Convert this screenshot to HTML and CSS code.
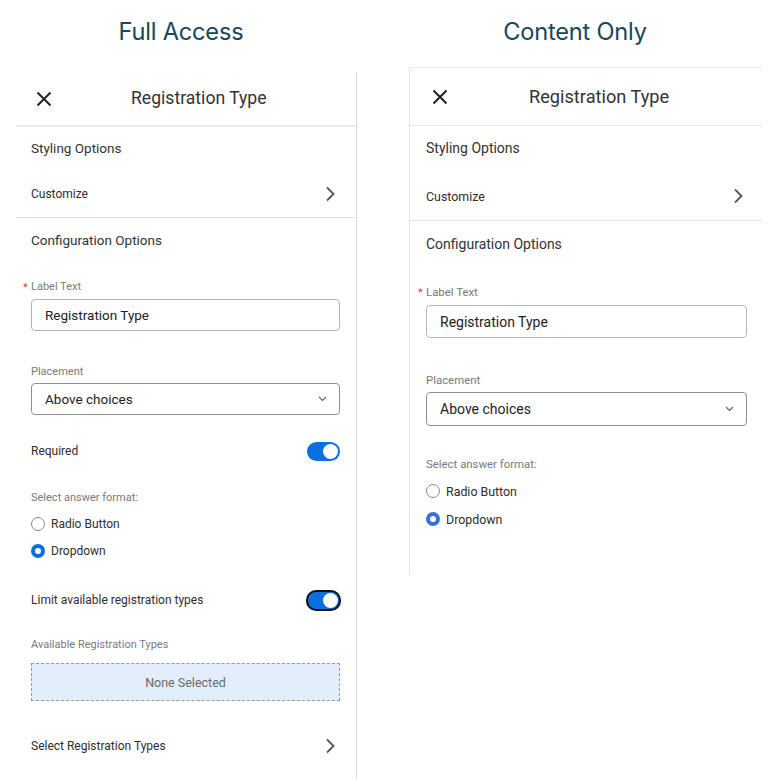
FILE: index.html
```html
<!DOCTYPE html>
<html lang="en">
<head>
<meta charset="utf-8">
<title>Registration Type – Full Access vs Content Only</title>
<link rel="stylesheet" href="styles.css">
</head>
<body>
<div class="compare">
  <section class="col col--full">
    <h1 class="col-title">Full Access</h1>
    <div class="panel panel--full">
      <div class="panel-header">
        <svg class="close-icon" width="16" height="16" viewBox="0 0 16 16"><path d="M1.5 1.5 L14.5 14.5 M14.5 1.5 L1.5 14.5" stroke="#222" stroke-width="2" fill="none"/></svg>
        <span class="panel-title">Registration Type</span>
      </div>
      <div class="section-title section-title--styling">Styling Options</div>
      <div class="nav-row nav-row--customize">
        <span>Customize</span>
        <svg class="chevron" width="10" height="16" viewBox="0 0 10 16"><path d="M2 1.5 L8.5 8 L2 14.5" stroke="#555" stroke-width="1.8" fill="none"/></svg>
      </div>
      <div class="section-title section-title--config">Configuration Options</div>

      <div class="field-label field-label--first"><span class="req">*</span>Label Text</div>
      <div class="text-input">Registration Type</div>

      <div class="field-label field-label--gap">Placement</div>
      <div class="select-input">
        <span>Above choices</span>
        <svg class="caret" width="9" height="6" viewBox="0 0 9 6"><path d="M1 1 L4.5 4.5 L8 1" stroke="#666" stroke-width="1.2" fill="none"/></svg>
      </div>

      <div class="toggle-row toggle-row--required">
        <span>Required</span>
        <span class="toggle"><span class="knob"></span></span>
      </div>

      <div class="field-label field-label--format">Select answer format:</div>
      <div class="radio-row radio-row--first"><span class="radio"></span>Radio Button</div>
      <div class="radio-row"><span class="radio radio--on"></span>Dropdown</div>

      <div class="toggle-row toggle-row--limit">
        <span>Limit available registration types</span>
        <span class="toggle toggle--focus"><span class="knob"></span></span>
      </div>

      <div class="field-label field-label--avail">Available Registration Types</div>
      <div class="empty-box">None Selected</div>

      <div class="nav-row nav-row--select">
        <span>Select Registration Types</span>
        <svg class="chevron" width="10" height="16" viewBox="0 0 10 16"><path d="M2 1.5 L8.5 8 L2 14.5" stroke="#555" stroke-width="1.8" fill="none"/></svg>
      </div>
    </div>
  </section>

  <section class="col col--content">
    <h1 class="col-title">Content Only</h1>
    <div class="panel panel--content">
      <div class="panel-header">
        <svg class="close-icon" width="16" height="16" viewBox="0 0 16 16"><path d="M1.5 1.5 L14.5 14.5 M14.5 1.5 L1.5 14.5" stroke="#222" stroke-width="2" fill="none"/></svg>
        <span class="panel-title">Registration Type</span>
      </div>
      <div class="section-title section-title--styling">Styling Options</div>
      <div class="nav-row nav-row--customize">
        <span>Customize</span>
        <svg class="chevron" width="10" height="16" viewBox="0 0 10 16"><path d="M2 1.5 L8.5 8 L2 14.5" stroke="#555" stroke-width="1.8" fill="none"/></svg>
      </div>
      <div class="section-title section-title--config">Configuration Options</div>

      <div class="field-label field-label--first"><span class="req">*</span>Label Text</div>
      <div class="text-input">Registration Type</div>

      <div class="field-label field-label--gap">Placement</div>
      <div class="select-input">
        <span>Above choices</span>
        <svg class="caret" width="9" height="6" viewBox="0 0 9 6"><path d="M1 1 L4.5 4.5 L8 1" stroke="#666" stroke-width="1.2" fill="none"/></svg>
      </div>

      <div class="field-label field-label--format">Select answer format:</div>
      <div class="radio-row radio-row--first"><span class="radio"></span>Radio Button</div>
      <div class="radio-row"><span class="radio radio--on"></span>Dropdown</div>
    </div>
  </section>
</div>
</body>
</html>
```

FILE: styles.css
```css
* { box-sizing: border-box; }

body {
  margin: 0;
  background: #fff;
  font-family: Roboto, "Liberation Sans", Arial, sans-serif;
  color: #2e2e2e;
}

.compare {
  display: flex;
  align-items: flex-start;
}

.col--full { width: 362px; }
.col--content { width: 374px; margin-left: 26px; }

.col-title {
  margin: 0;
  padding-top: 17px;
  height: 47px;
  line-height: 30px;
  text-align: center;
  font-family: Inter, "Open Sans", sans-serif;
  font-weight: 400;
  font-size: 23.6px;
  color: #17475a;
  letter-spacing: -0.2px;
}

/* ---------- panel ---------- */
.panel {
  display: flex;
  flex-direction: column;
  background: #fff;
}

.panel--full {
  margin-top: 25px;
  margin-left: 16px;
  width: 341px;
  min-height: 707px;
  border-right: 1px solid #dcdcdc;
  padding: 0 16px 0 15px;
}

.panel--content {
  margin-top: 20px;
  margin-left: 21px;
  width: 353px;
  min-height: 508px;
  border-left: 1px solid #e6e6e6;
  border-top: 1px solid #ececec;
  padding: 0 15px 0 16px;
}

.panel-header {
  display: flex;
  align-items: center;
  margin: 0 -16px 0 -15px;
  padding-left: 20px;
  height: 55px;
  border-bottom: 2px solid #ececec;
}

.panel--content .panel-header {
  margin: 0 -15px 0 -16px;
  padding-left: 22px;
  height: 58px;
  border-bottom: 1px solid #e8e8e8;
}

.close-icon { flex: none; }

.panel-title {
  margin-left: 79px;
  font-size: 17.6px;
  color: #333;
  padding-bottom: 2px;
}

.panel--content .panel-title {
  margin-left: 81px;
  font-size: 18.2px;
  padding-bottom: 0;
}

.section-title {
  font-size: 13.5px;
  line-height: 20px;
  color: #333;
}

.section-title--styling { padding: 11px 0 12px; }
.section-title--config { padding-top: 12px; }

.panel--content .section-title { font-size: 14px; }
.panel--content .section-title--styling { padding: 12px 0 14px; }
.panel--content .section-title--config { padding-top: 13px; }

.nav-row {
  display: flex;
  align-items: center;
  justify-content: space-between;
  font-size: 12px;
  color: #2e2e2e;
  padding-right: 5px;
}

.nav-row--customize {
  height: 48px;
  margin: 0 -16px 0 -15px;
  padding: 0 21px 0 15px;
  border-bottom: 1px solid #e0e0e0;
}

.panel--content .nav-row--customize {
  height: 49px;
  margin: 0 -15px 0 -16px;
  padding: 0 19px 0 16px;
  font-size: 12.4px;
}

.nav-row--select {
  height: 20px;
  margin-top: 35px;
}

/* ---------- fields ---------- */
.field-label {
  position: relative;
  font-size: 11px;
  line-height: 14px;
  color: #7a7a7a;
}

.field-label--first { margin-top: 30px; }
.field-label--gap { margin-top: 34px; }
.field-label--format { margin-top: 30px; }
.field-label--avail { margin-top: 28px; }

.panel--content .field-label { font-size: 11.4px; }
.panel--content .field-label--first { margin-top: 31px; }
.panel--content .field-label--gap { margin-top: 35px; }
.panel--content .field-label--format { margin-top: 31px; }

.req {
  position: absolute;
  left: -8px;
  top: 1px;
  color: #d9453a;
  font-size: 11px;
}

.text-input,
.select-input {
  margin-top: 5px;
  height: 32px;
  border: 1px solid #b5b5b5;
  border-radius: 4px;
  padding: 0 13px;
  display: flex;
  align-items: center;
  font-size: 13.5px;
  color: #222;
}

.select-input {
  margin-top: 4px;
  justify-content: space-between;
  border-color: #8f8f8f;
  padding-right: 12px;
}

.panel--content .text-input { margin-top: 6px; height: 33px; font-size: 14px; }
.panel--content .select-input { margin-top: 5px; height: 34px; font-size: 14px; }

/* ---------- toggles ---------- */
.toggle-row {
  display: flex;
  align-items: center;
  justify-content: space-between;
  height: 20px;
  font-size: 12px;
  color: #2e2e2e;
}

.toggle-row--required { margin-top: 26px; }
.toggle-row--limit { margin-top: 30px; }

.toggle {
  width: 33px;
  height: 19px;
  border-radius: 10px;
  background: #0c6fdf;
  display: flex;
  align-items: center;
  justify-content: flex-end;
  padding-right: 2px;
}

.toggle--focus {
  width: 35px;
  height: 21px;
  border: 2px solid #111;
  padding-right: 1px;
  margin-right: -1px;
}

.knob {
  width: 15px;
  height: 15px;
  border-radius: 50%;
  background: #fff;
}

/* ---------- radios ---------- */
.radio-row {
  display: flex;
  align-items: center;
  height: 18px;
  margin-top: 9px;
  font-size: 12px;
  color: #2e2e2e;
}

.radio-row--first { margin-top: 10px; }

.panel--content .radio-row { margin-top: 10px; font-size: 12.4px; }
.panel--content .radio-row--first { margin-top: 11px; }

.radio {
  width: 14px;
  height: 14px;
  border-radius: 50%;
  border: 1px solid #8a8a8a;
  margin-right: 6px;
  flex: none;
}

.radio--on {
  border: 4px solid #0c6fdf;
  background: #fff;
}

.panel--content .radio--on { border-color: #3a6fdb; }

/* ---------- empty box ---------- */
.empty-box {
  margin-top: 11px;
  height: 38px;
  border: 1px dashed #9a9a9a;
  background: #e3eefc;
  display: flex;
  align-items: center;
  justify-content: center;
  font-size: 12.5px;
  color: #6a6a6a;
}
```
